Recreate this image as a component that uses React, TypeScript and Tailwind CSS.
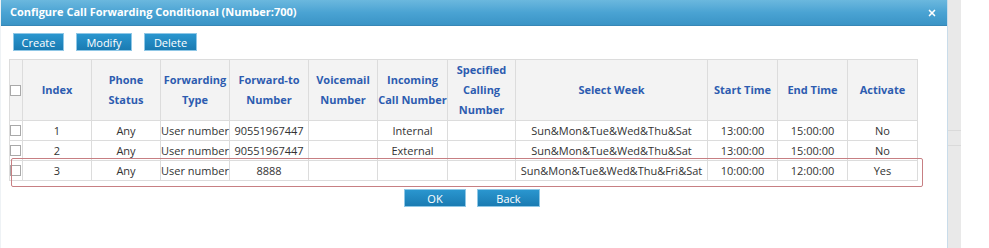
import { X } from 'lucide-react';

interface Rule {
  index: number;
  status: string;
  type: string;
  forwardTo: string;
  voicemail: string;
  incoming: string;
  specified: string;
  week: string;
  start: string;
  end: string;
  active: string;
}

const rules: Rule[] = [
  { index: 1, status: 'Any', type: 'User number', forwardTo: '90551967447', voicemail: '', incoming: 'Internal', specified: '', week: 'Sun&Mon&Tue&Wed&Thu&Sat', start: '13:00:00', end: '15:00:00', active: 'No' },
  { index: 2, status: 'Any', type: 'User number', forwardTo: '90551967447', voicemail: '', incoming: 'External', specified: '', week: 'Sun&Mon&Tue&Wed&Thu&Sat', start: '13:00:00', end: '15:00:00', active: 'No' },
  { index: 3, status: 'Any', type: 'User number', forwardTo: '8888', voicemail: '', incoming: '', specified: '', week: 'Sun&Mon&Tue&Wed&Thu&Fri&Sat', start: '10:00:00', end: '12:00:00', active: 'Yes' },
];

const columns: { label: string[]; width: string }[] = [
  { label: ['Index'], width: 'w-[69px]' },
  { label: ['Phone', 'Status'], width: 'w-[69px]' },
  { label: ['Forwarding', 'Type'], width: 'w-[69px]' },
  { label: ['Forward-to', 'Number'], width: 'w-[79px]' },
  { label: ['Voicemail', 'Number'], width: 'w-[69px]' },
  { label: ['Incoming', 'Call Number'], width: 'w-[70px]' },
  { label: ['Specified', 'Calling', 'Number'], width: 'w-[68px]' },
  { label: ['Select Week'], width: 'w-[192px]' },
  { label: ['Start Time'], width: 'w-[70px]' },
  { label: ['End Time'], width: 'w-[70px]' },
  { label: ['Activate'], width: 'w-[70px]' },
];

function Box() {
  return <span className="block w-[11px] h-[11px] border border-[#a9a9a9] bg-white" />;
}

function BlueButton({ label, width }: { label: string; width: string }) {
  return (
    <button
      className={`${width} h-[18px] flex items-center justify-center bg-gradient-to-b from-[#2a96cf] to-[#1a7bb2] border border-[#8fc7e6] text-white text-[11px] leading-none`}
    >
      {label}
    </button>
  );
}

export default function App() {
  return (
    <div className="w-[989px] h-[248px] flex bg-white overflow-hidden font-['Open_Sans','Liberation_Sans',sans-serif]">
      {/* Dialog */}
      <div className="w-[947px] h-full flex flex-col bg-white border-l border-[#eef2f5]">
        <div className="h-[26px] flex items-center justify-between pl-[9px] pr-[10px] bg-gradient-to-b from-[#6bb8de] via-[#4aa3d3] to-[#3a94c6] border-b border-[#3787b6]">
          <span className="text-white font-bold text-[11px]">
            Configure Call Forwarding Conditional (Number:700)
          </span>
          <X className="w-[10px] h-[10px] text-white" strokeWidth={4} />
        </div>

        <div className="flex gap-[12px] pl-[12px] pt-[7px]">
          <BlueButton label="Create" width="w-[51px]" />
          <BlueButton label="Modify" width="w-[56px]" />
          <BlueButton label="Delete" width="w-[53px]" />
        </div>

        {/* Table */}
        <div className="relative pl-[8px] pt-[8px]">
          <table className="table-fixed border-collapse w-[908px] text-[11px] text-[#333]">
            <colgroup>
              <col className="w-[13px]" />
              {columns.map((c) => (
                <col key={c.label.join(' ')} className={c.width} />
              ))}
            </colgroup>
            <thead>
              <tr className="h-[61px] bg-[#f3f3f3]">
                <th className="border border-[#dcdcdc] px-0 align-middle">
                  <Box />
                </th>
                {columns.map((c) => (
                  <th
                    key={c.label.join(' ')}
                    className="border border-[#dcdcdc] text-center font-bold text-[#2d5cb0] leading-[20px] whitespace-nowrap"
                  >
                    {c.label.map((l) => (
                      <div key={l}>{l}</div>
                    ))}
                  </th>
                ))}
              </tr>
            </thead>
            <tbody>
              {rules.map((r) => (
                <tr key={r.index} className="h-[20px]">
                  <td className="border border-[#dcdcdc] px-0">
                    <Box />
                  </td>
                  {[r.index, r.status, r.type, r.forwardTo, r.voicemail, r.incoming, r.specified, r.week, r.start, r.end, r.active].map((v, i) => (
                    <td key={i} className="border border-[#dcdcdc] text-center whitespace-nowrap leading-[19px] p-0">
                      {v}
                    </td>
                  ))}
                </tr>
              ))}
            </tbody>
          </table>
          {/* highlight around row 3 */}
          <div className="absolute left-[10px] top-[107px] w-[912px] h-[29px] border-[1.5px] border-[#c77f83] rounded-[2px] pointer-events-none" />
        </div>

        <div className="flex justify-center gap-[11px] pt-[8px] pr-[4px]">
          <BlueButton label="OK" width="w-[62px]" />
          <BlueButton label="Back" width="w-[63px]" />
        </div>
      </div>

      {/* Background page strip */}
      <div className="w-[14px] h-full bg-[#e9e9e9] border-l border-[#c9dcea] flex flex-col">
        <div className="h-[130px]" />
        <div className="h-[1px] bg-[#dadada]" />
        <div className="h-[14px]" />
        <div className="h-[1px] bg-[#dadada]" />
      </div>
      <div className="flex-1 bg-white" />
    </div>
  );
}
